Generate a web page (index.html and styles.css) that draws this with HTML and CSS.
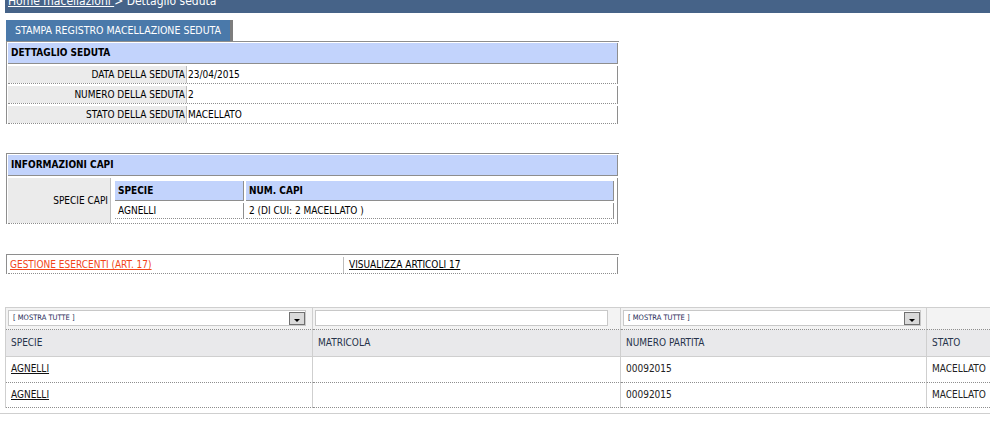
FILE: index.html
```html
<!DOCTYPE html>
<html lang="it">
<head>
<meta charset="utf-8">
<title>Dettaglio seduta</title>
<link rel="stylesheet" href="styles.css">
</head>
<body>
<div class="topbar"><span class="crumb"><a href="#" class="crumb-link">Home macellazioni </a> &gt; Dettaglio seduta</span></div>

<div class="tabs"><a href="#" class="tab">STAMPA REGISTRO MACELLAZIONE SEDUTA</a></div>

<div class="panel p1">
  <div class="phead">DETTAGLIO SEDUTA</div>
  <div class="prow"><div class="plabel">DATA DELLA SEDUTA</div><div class="pval">23/04/2015</div></div>
  <div class="prow"><div class="plabel">NUMERO DELLA SEDUTA</div><div class="pval">2</div></div>
  <div class="prow"><div class="plabel">STATO DELLA SEDUTA</div><div class="pval">MACELLATO</div></div>
</div>

<div class="panel p2">
  <div class="phead">INFORMAZIONI CAPI</div>
  <div class="prow tall">
    <div class="plabel short">SPECIE CAPI</div>
    <div class="pval nested-wrap">
      <div class="nested">
        <div class="nh c1">SPECIE</div><div class="nh c2">NUM. CAPI</div>
        <div class="nd c1">AGNELLI</div><div class="nd c2">2 (DI CUI: 2 MACELLATO )</div>
      </div>
    </div>
  </div>
</div>

<div class="panel p3">
  <div class="prow links">
    <div class="lcell"><a href="#" class="orange">GESTIONE ESERCENTI (ART. 17)</a></div>
    <div class="lcell second"><a href="#" class="black">VISUALIZZA ARTICOLI 17</a></div>
  </div>
</div>

<div class="grid">
  <div class="gf"><div class="sel"><span>[ MOSTRA TUTTE ]</span><i class="arr"></i></div></div>
  <div class="gf"><div class="txt"></div></div>
  <div class="gf"><div class="sel"><span>[ MOSTRA TUTTE ]</span><i class="arr"></i></div></div>
  <div class="gf"></div>

  <div class="gh">SPECIE</div>
  <div class="gh">MATRICOLA</div>
  <div class="gh">NUMERO PARTITA</div>
  <div class="gh">STATO</div>

  <div class="gd"><a href="#">AGNELLI</a></div>
  <div class="gd"></div>
  <div class="gd">00092015</div>
  <div class="gd">MACELLATO</div>

  <div class="gd"><a href="#">AGNELLI</a></div>
  <div class="gd"></div>
  <div class="gd">00092015</div>
  <div class="gd">MACELLATO</div>
</div>
<div class="bottomline"></div>
</body>
</html>
```
FILE: styles.css
```css
html, body { margin: 0; padding: 0; overflow: hidden; background: #fff; }
body {
  font-family: "DejaVu Sans Condensed", "DejaVu Sans", sans-serif;
  font-stretch: condensed;
  font-size: 10px;
  color: #000;
  width: 990px;
}
a { color: inherit; }

.topbar {
  margin-left: 5px;
  height: 13px;
  background: #466388;
  overflow: hidden;
  padding-left: 3px;
}
.crumb {
  display: block;
  margin-top: -7px;
  font-size: 12px;
  line-height: 17px;
  color: #fff;
  white-space: nowrap;
}
.crumb-link { color: #fff; text-decoration: underline; }

.tabs { margin: 7px 0 0 6px; height: 21px; }
.tab {
  display: inline-block;
  width: 227px;
  height: 21px;
  line-height: 21px;
  background: #4a79aa;
  border-right: 3px solid #7d7d7d;
  color: #fff;
  text-align: center;
  text-decoration: none;
  box-sizing: border-box;
  font-size: 10.5px;
}

.panel {
  margin-left: 6px;
  width: 613px;
  border-top: 1px solid #8e8e8e;
  border-left: 1px solid #8e8e8e;
  padding: 1px 0 0 1px;
  box-sizing: border-box;
}
.p2 { margin-top: 29px; }
.p3 { margin-top: 30px; }

.phead {
  height: 20px;
  line-height: 20px;
  background: #c2d3fc;
  border-right: 1px solid #8e8e8e;
  border-bottom: 1px solid #8e8e8e;
  margin-right: 1px;
  padding-left: 3px;
  font-weight: bold;
}
.prow {
  display: flex;
  margin-top: 2px;
  margin-right: 1px;
  height: 17px;
  border-bottom: 1px dotted #8e8e8e;
  border-right: 1px solid #8e8e8e;
}
.plabel {
  width: 179px;
  background: #ebebeb;
  border-right: 1px solid #bdbdbd;
  text-align: right;
  line-height: 17px;
  padding-right: 1px;
  box-sizing: border-box;
  flex: none;
}
.pval {
  flex: 1;
  line-height: 17px;
  padding-left: 1px;
}

.prow.tall { height: 45px; }
.plabel.short {
  width: 103px;
  line-height: 45px;
  padding-right: 2px;
  border-right: 1px solid #bdbdbd;
}
.nested-wrap { padding: 3px 3px 0 4px; }
.nested {
  display: grid;
  grid-template-columns: 129px 1fr;
  grid-template-rows: 20px 16px;
  row-gap: 2px;
  column-gap: 2px;
}
.nh {
  background: #c2d3fc;
  font-weight: bold;
  line-height: 19px;
  padding-left: 3px;
  border-right: 1px solid #8e8e8e;
  border-bottom: 1px solid #8e8e8e;
}
.nd {
  line-height: 16px;
  padding-left: 3px;
  border-right: 1px solid #8e8e8e;
  border-bottom: 1px dotted #8e8e8e;
}

.prow.links { margin-top: 1px; height: 16px; }
.lcell { line-height: 16px; padding-left: 2px; width: 336px; flex: none; box-sizing: border-box; border-right: 1px solid #bdbdbd; }
.lcell.second { flex: 1; width: auto; border-right: none; padding-left: 5px; }
.orange { color: #f2461a; }
.black { color: #000; }

.grid {
  margin-top: 33px;
  margin-left: 5px;
  width: 1100px;
  display: grid;
  grid-template-columns: 307px 308px 306px 1fr;
  grid-template-rows: 22px 27px 26px 25px;
  border-top: 1px solid #cfcfcf;
  border-left: 1px solid #cfcfcf;
  color: #222;
}
.grid > div { border-right: 1px solid #cfcfcf; box-sizing: border-box; }
.gf {
  background: #f3f3f3;
  border-bottom: 1px dotted #8e8e8e;
  padding: 2px 0 0 2px;
}
.gh {
  background: #e9e9eb;
  border-bottom: 1px solid #cfcfcf;
  line-height: 26px;
  padding-left: 5px;
  color: #26334a;
}
.gd {
  border-bottom: 1px dotted #8e8e8e;
  line-height: 24px;
  padding-left: 5px;
}
.gd a { color: #111; }

.sel {
  position: relative;
  width: 298px;
  height: 16px;
  background: #fff;
  border: 1px solid #c8c8c8;
  box-sizing: border-box;
  font-size: 7.5px;
  line-height: 14px;
  padding-left: 4px;
  color: #1e2a56;
}
.arr {
  position: absolute;
  right: 0;
  top: 1px;
  width: 16px;
  height: 13px;
  background: #dadada;
  border: 1px solid #707070;
  box-sizing: border-box;
}
.arr::after {
  content: "";
  position: absolute;
  left: 4px;
  top: 6px;
  border-left: 3px solid transparent;
  border-right: 3px solid transparent;
  border-top: 3px solid #000;
}
.txt {
  width: 293px;
  height: 16px;
  background: #fff;
  border: 1px solid #c8c8c8;
  box-sizing: border-box;
}

.bottomline {
  margin-top: 5px;
  height: 1px;
  background: #cfcfcf;
}
```
